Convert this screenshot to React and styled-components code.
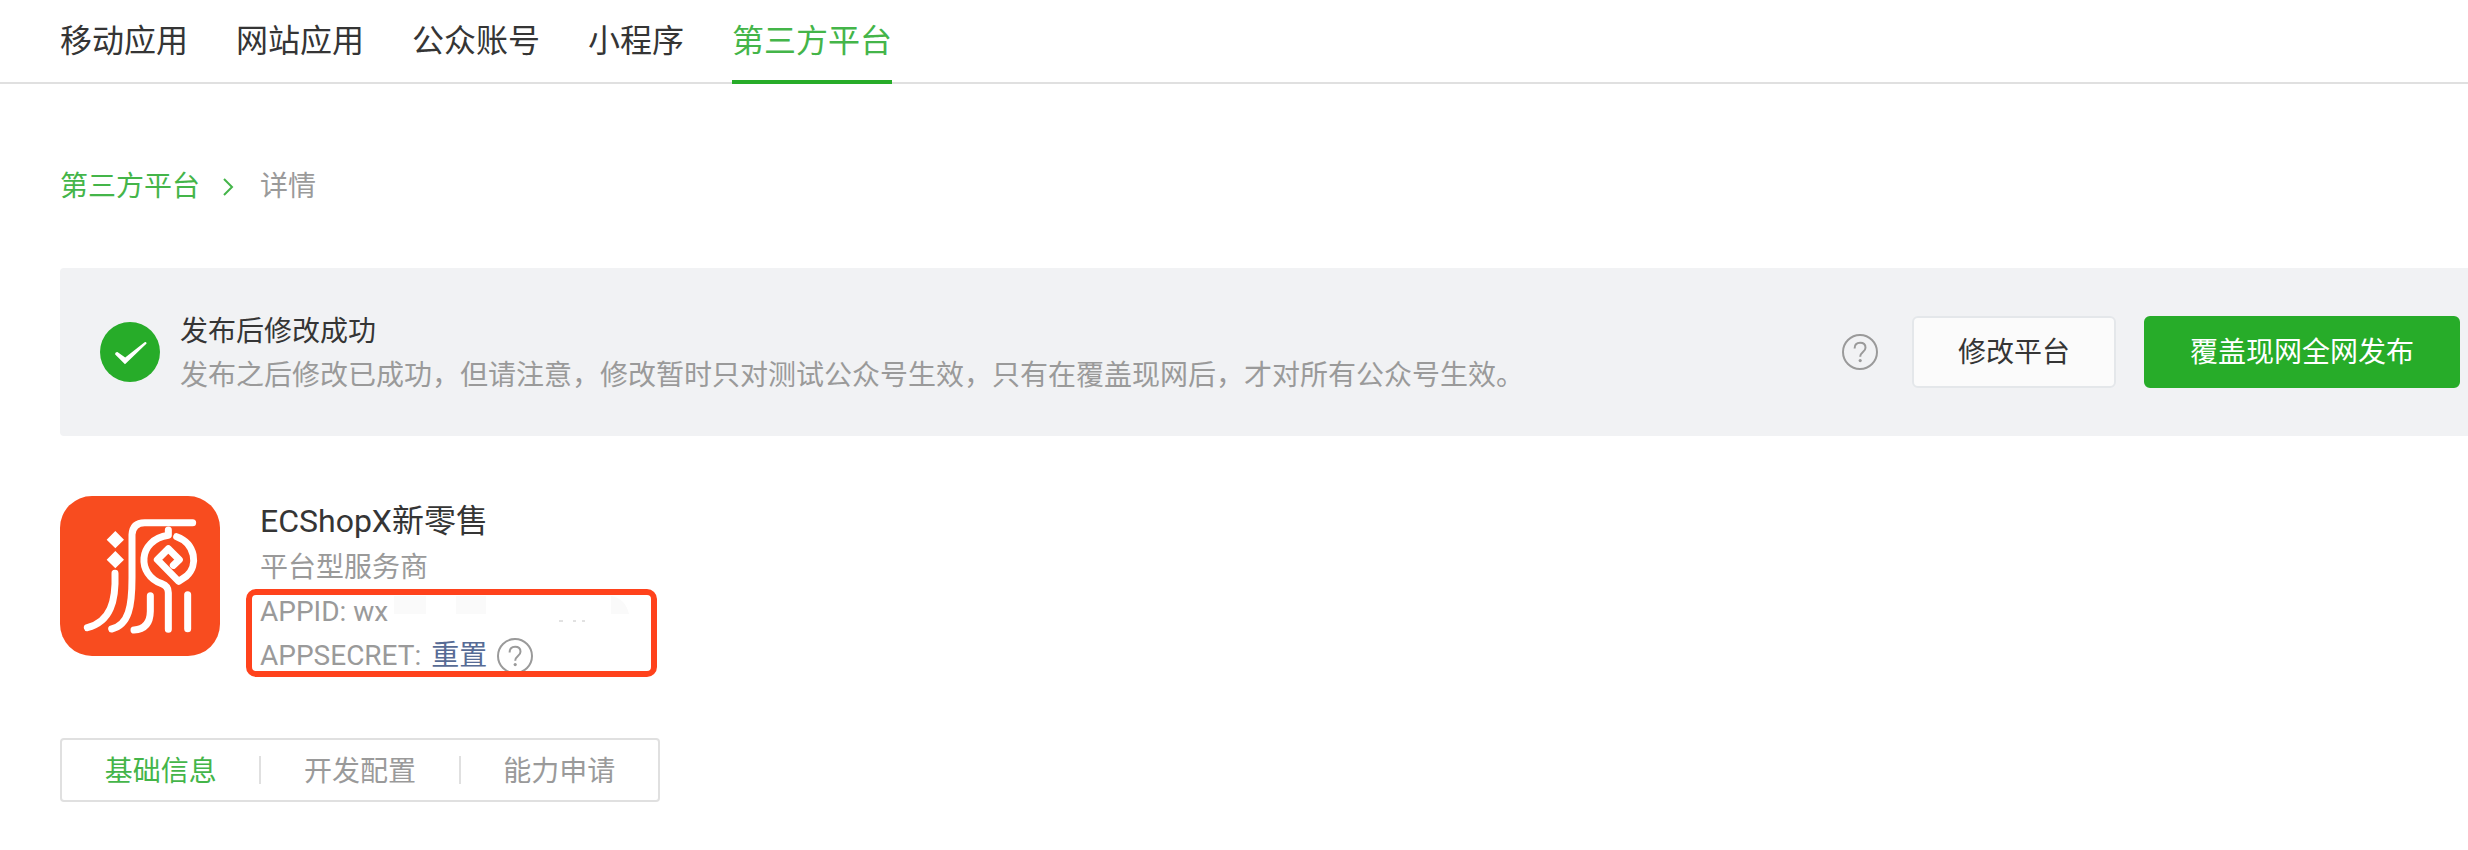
import styled, {createGlobalStyle} from "styled-components";

const GlobalStyle = createGlobalStyle`
  * {
    box-sizing: border-box;
  }

  body {
    margin: 0;
    overflow-x: hidden;
    background: #fff;
    color: #353535;
    font-family: Roboto, "Noto Sans CJK SC", sans-serif;
    font-size: 28px;
    line-height: 44px;
  }

  a {
    color: inherit;
    text-decoration: none;
  }
`;

const NavBar = styled.nav`
  display: flex;
  gap: 48px;
  height: 84px;
  padding-left: 60px;
  border-bottom: 2px solid #e0e0e0;
`;

const NavLink = styled.a`
  height: 84px;
  padding-top: 17px;
  font-size: 32px;
  line-height: 48px;
  color: ${(props) => (props.$active ? "#44b549" : "#353535")};
  border-bottom: 4px solid ${(props) => (props.$active ? "#27ac29" : "transparent")};
`;

const Content = styled.main`
  padding: 80px 0 0 60px;
`;

const Breadcrumb = styled.nav`
  display: flex;
  align-items: center;
  gap: 22px;
  height: 44px;
  padding-top: 2px;
  color: #9a9a9a;

  a {
    color: #44b549;
  }
`;

const Banner = styled.section`
  display: flex;
  align-items: center;
  min-height: 168px;
  margin-top: 60px;
  padding: 0 8px 0 40px;
  background: #f1f2f4;
  border-radius: 4px 0 0 4px;
`;

const BannerText = styled.div`
  flex: 1;
  margin-left: 20px;
  padding-top: 4px;
`;

const Title = styled.h2`
  margin: 0;
  font-size: 28px;
  font-weight: 400;
`;

const Muted = styled.p`
  margin: 0;
  color: #9a9a9a;
`;

const Button = styled.button`
  height: 72px;
  margin-left: ${(props) => (props.$primary ? "28px" : "34px")};
  padding: 2px 44px 0;
  font: inherit;
  color: ${(props) => (props.$primary ? "#fff" : "#353535")};
  background: ${(props) => (props.$primary ? "#27ac29" : "#fbfbfb")};
  border: 2px solid ${(props) => (props.$primary ? "#27ac29" : "#e4e7ea")};
  border-radius: 6px;
`;

const HelpButton = styled.button`
  display: flex;
  padding: 0;
  color: #9a9a9a;
  background: none;
  border: 0;
`;

const Account = styled.section`
  display: flex;
  gap: 40px;
  margin-top: 60px;
`;

const AccountName = styled.h1`
  margin: 0;
  font-size: 32px;
  font-weight: 400;
  line-height: 50px;
`;

const Credentials = styled.div`
  position: relative;
  color: #9a9a9a;
`;

const Highlight = styled.div`
  position: absolute;
  inset: -1px auto 1px -14px;
  width: 411px;
  border: 6px solid #ff421c;
  border-radius: 10px;
  pointer-events: none;
`;

const IdRow = styled.div`
  display: flex;
  align-items: flex-start;
  gap: 6px;
`;

const SecretRow = styled.div`
  display: flex;
  align-items: center;
  gap: 10px;
`;

const ResetLink = styled.a`
  color: #576b95;
`;

const Tabs = styled.div`
  display: flex;
  width: 600px;
  margin-top: 60px;
  padding: 16px 0;
  border: 2px solid #e0e0e0;
  border-radius: 4px;
`;

const Tab = styled.button`
  flex: 1;
  height: 28px;
  padding: 2px 0 0;
  font: inherit;
  line-height: 28px;
  color: ${(props) => (props.$active ? "#44b549" : "#9a9a9a")};
  background: none;
  border: 0;

  & + & {
    border-left: 2px solid #e0e0e0;
  }
`;

const HelpIcon = () => (
    <svg width="36" height="36" viewBox="0 0 36 36" fill="none" stroke="currentColor" strokeWidth="2">
        <circle cx="18" cy="18" r="17"/>
        <path d="M12.6 14.4c0-3.6 2.2-5.6 5.5-5.6s5.4 2 5.4 4.9c0 4.3-5.3 4.3-5.3 9"/>
        <circle cx="18.2" cy="26.6" r="1.6" fill="currentColor" stroke="none"/>
    </svg>
)

const SuccessIcon = () => (
    <svg width="60" height="60" viewBox="0 0 60 60">
        <circle cx="30" cy="30" r="30" fill="#27ac29"/>
        <path d="M17.4 30L25.2 35.6L44.6 20.2Q46.2 19.4 46.6 21.4L25 42.2L15.2 32.6Q14.8 30 17.4 30z" fill="#fff"/>
    </svg>
)

const Chevron = () => (
    <svg width="16" height="18" viewBox="0 0 16 18" fill="none" stroke="#44b549" strokeWidth="2">
        <path d="M2 1l8 8-8 8"/>
    </svg>
)

const Logo = () => (
    <svg width="160" height="160" viewBox="0 0 480 480" fill="none" stroke="#fff" strokeWidth="21"
         strokeLinecap="round" strokeLinejoin="round">
        <rect width="480" height="480" rx="96" fill="#f84c1f" stroke="none"/>
        <path d="M166 105l26 26-26 26-26-26zM166 165l26 26-26 26-26-26z" fill="#fff" stroke="none"/>
        <path d="M165 232C168 315 152 377 82 395"/>
        <path d="M398 80H254Q218 80 216 116V245C216 330 207 387 155 399"/>
        <path d="M271 299V346Q270 400 222 402"/>
        <path d="M325 400V290Q325 270 305 263C230 237 232 132 325 118V102"/>
        <path d="M350 122C407 143 415 208 380 240L356 256L292 191L325 158L358 191L340 208"/>
        <path d="M383 296V398"/>
    </svg>
)

// leftover of the masked id
const MaskedId = () => (
    <svg width="260" height="32" viewBox="0 0 260 32" fill="#fafafa" aria-hidden="true">
        <path d="M0 6h32v18H0zM62 6h30v18H62zM217 6q14 2 18 18h-18z"/>
        <path d="M165 31h4M179 31h3M188 31h3" stroke="#c4c4c4" strokeWidth="1"/>
    </svg>
)

const navItems = ["移动应用", "网站应用", "公众账号", "小程序", "第三方平台"]
const tabItems = ["基础信息", "开发配置", "能力申请"]

const App = () => {
    return (
        <>
            <GlobalStyle/>
            <NavBar>
                {navItems.map((item) => (
                    <NavLink href="#" key={item} $active={item === "第三方平台"}>{item}</NavLink>
                ))}
            </NavBar>
            <Content>
                <Breadcrumb>
                    <a href="#">第三方平台</a>
                    <Chevron/>
                    <span>详情</span>
                </Breadcrumb>
                <Banner>
                    <SuccessIcon/>
                    <BannerText>
                        <Title>发布后修改成功</Title>
                        <Muted>发布之后修改已成功，但请注意，修改暂时只对测试公众号生效，只有在覆盖现网后，才对所有公众号生效。</Muted>
                    </BannerText>
                    <HelpButton aria-label="帮助"><HelpIcon/></HelpButton>
                    <Button>修改平台</Button>
                    <Button $primary>覆盖现网全网发布</Button>
                </Banner>
                <Account>
                    <Logo/>
                    <div>
                        <AccountName>ECShopX新零售</AccountName>
                        <Muted>平台型服务商</Muted>
                        <Credentials>
                            <IdRow>
                                <span>APPID: wx</span>
                                <MaskedId/>
                            </IdRow>
                            <SecretRow>
                                <span>APPSECRET:</span>
                                <ResetLink href="#">重置</ResetLink>
                                <HelpButton aria-label="帮助"><HelpIcon/></HelpButton>
                            </SecretRow>
                            <Highlight/>
                        </Credentials>
                    </div>
                </Account>
                <Tabs>
                    {tabItems.map((item, i) => (
                        <Tab key={item} $active={i === 0}>{item}</Tab>
                    ))}
                </Tabs>
            </Content>
        </>
    )
}

export default App;
